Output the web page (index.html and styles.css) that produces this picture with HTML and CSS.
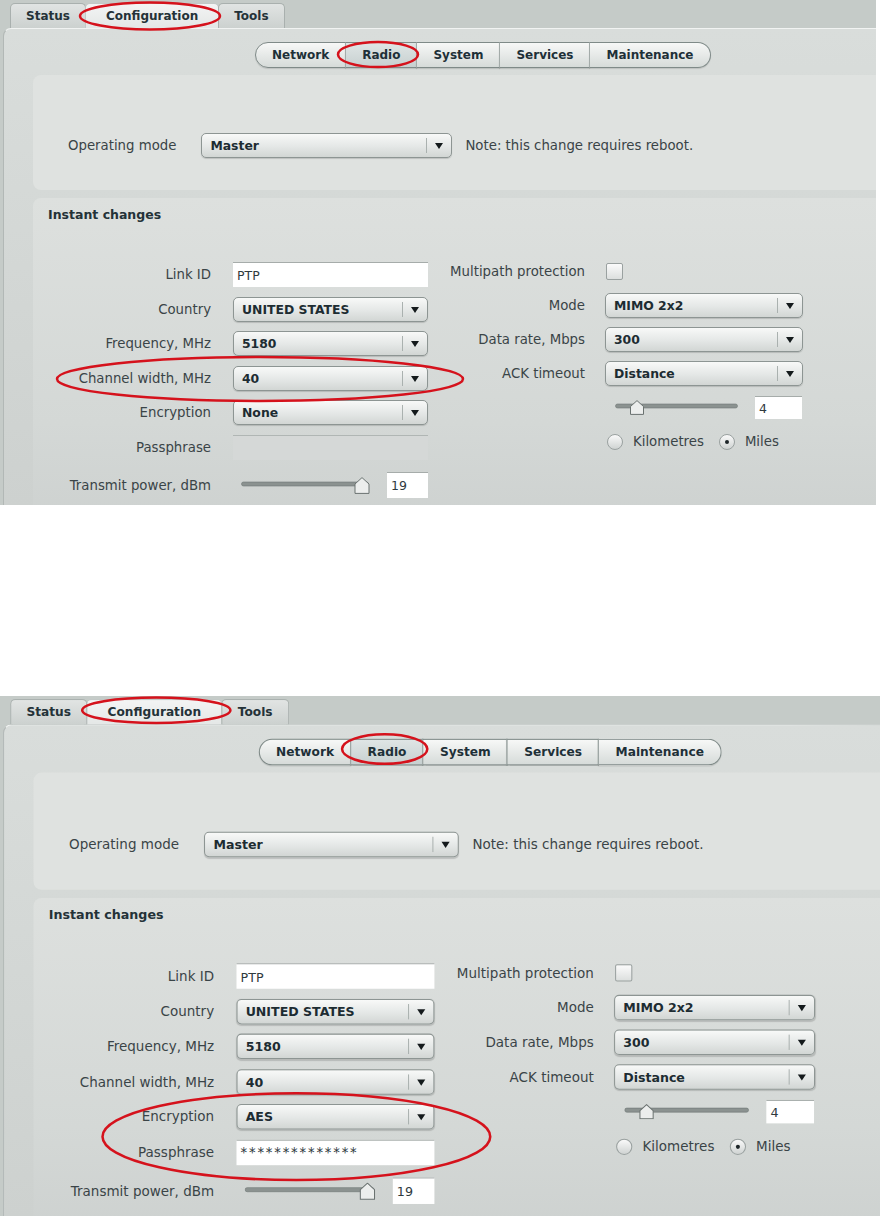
FILE: index.html
```html
<!DOCTYPE html>
<html lang="en">
<head>
    <meta charset="UTF-8">
    <title>Radio configuration</title>
    <link rel="stylesheet" href="styles.css">
</head>
<body>

<!-- Screenshot 1: encryption off -->
<div class="shot">
    <div class="tabs">
        <span class="tab">Status</span>
        <span class="tab tab-active">Configuration</span>
        <span class="tab">Tools</span>
    </div>
    <div class="content">
        <div class="subtabs">
            <span class="subtab">Network</span>
            <span class="subtab subtab-active">Radio</span>
            <span class="subtab">System</span>
            <span class="subtab">Services</span>
            <span class="subtab">Maintenance</span>
        </div>

        <div class="section section-mode">
            <div class="mode-row">
                <span class="label">Operating mode</span>
                <div class="select select-mode"><span>Master</span><i class="arrow"></i></div>
                <span class="label note">Note: this change requires reboot.</span>
            </div>
        </div>

        <div class="section section-instant">
            <h3>Instant changes</h3>
            <div class="fields">
                <div class="col col-left">
                    <span class="label">Link ID</span>
                    <div class="text">PTP</div>
                    <span class="label">Country</span>
                    <div class="select"><span>UNITED STATES</span><i class="arrow"></i></div>
                    <span class="label">Frequency, MHz</span>
                    <div class="select"><span>5180</span><i class="arrow"></i></div>
                    <span class="label">Channel width, MHz</span>
                    <div class="select"><span>40</span><i class="arrow"></i></div>
                    <span class="label">Encryption</span>
                    <div class="select"><span>None</span><i class="arrow"></i></div>
                    <span class="label">Passphrase</span>
                    <div class="text text-disabled"></div>
                    <span class="label row-power">Transmit power, dBm</span>
                    <div class="slider-cell row-power">
                        <svg class="slider slider-power" width="130" height="17" viewBox="0 0 130 17">
                            <rect x="0.5" y="5" width="127" height="4" rx="2" fill="#8b9290" stroke="#6f7775" stroke-width="0.6"/>
                            <polygon points="121,0.6 128,7 128,16.4 114,16.4 114,7" fill="#eceeed" stroke="#6a7270"/>
                        </svg>
                        <div class="text text-small">19</div>
                    </div>
                </div>

                <div class="col col-right">
                    <span class="label">Multipath protection</span>
                    <div><span class="checkbox"></span></div>
                    <span class="label">Mode</span>
                    <div class="select"><span>MIMO 2x2</span><i class="arrow"></i></div>
                    <span class="label">Data rate, Mbps</span>
                    <div class="select"><span>300</span><i class="arrow"></i></div>
                    <span class="label">ACK timeout</span>
                    <div class="select"><span>Distance</span><i class="arrow"></i></div>
                    <span></span>
                    <div class="slider-cell">
                        <svg class="slider slider-ack" width="124" height="15" viewBox="0 0 124 15">
                            <rect x="0.5" y="4" width="122" height="4" rx="2" fill="#8b9290" stroke="#6f7775" stroke-width="0.6"/>
                            <polygon points="22,0.6 28.5,6.5 28.5,14.4 15.5,14.4 15.5,6.5" fill="#eceeed" stroke="#6a7270"/>
                        </svg>
                        <div class="text text-ack">4</div>
                    </div>
                    <span></span>
                    <div class="radios">
                        <span class="radio"></span><span class="label">Kilometres</span>
                        <span class="radio radio-on"></span><span class="label">Miles</span>
                    </div>
                </div>
            </div>
        </div>
    </div>

    <svg class="marks" width="876" height="505" viewBox="0 0 876 505">
        <ellipse cx="150" cy="16" rx="70" ry="13.5"/>
        <ellipse cx="378" cy="54.5" rx="40" ry="12.5"/>
        <ellipse cx="260" cy="379" rx="203" ry="22"/>
    </svg>
</div>

<!-- Screenshot 2: AES encryption with passphrase -->
<div class="shot shot-b">
    <div class="tabs">
        <span class="tab">Status</span>
        <span class="tab tab-active">Configuration</span>
        <span class="tab">Tools</span>
    </div>
    <div class="content">
        <div class="subtabs">
            <span class="subtab">Network</span>
            <span class="subtab subtab-active">Radio</span>
            <span class="subtab">System</span>
            <span class="subtab">Services</span>
            <span class="subtab">Maintenance</span>
        </div>

        <div class="section section-mode">
            <div class="mode-row">
                <span class="label">Operating mode</span>
                <div class="select select-mode"><span>Master</span><i class="arrow"></i></div>
                <span class="label note">Note: this change requires reboot.</span>
            </div>
        </div>

        <div class="section section-instant">
            <h3>Instant changes</h3>
            <div class="fields">
                <div class="col col-left">
                    <span class="label">Link ID</span>
                    <div class="text">PTP</div>
                    <span class="label">Country</span>
                    <div class="select"><span>UNITED STATES</span><i class="arrow"></i></div>
                    <span class="label">Frequency, MHz</span>
                    <div class="select"><span>5180</span><i class="arrow"></i></div>
                    <span class="label">Channel width, MHz</span>
                    <div class="select"><span>40</span><i class="arrow"></i></div>
                    <span class="label">Encryption</span>
                    <div class="select"><span>AES</span><i class="arrow"></i></div>
                    <span class="label">Passphrase</span>
                    <div class="text text-secret">**************</div>
                    <span class="label row-power">Transmit power, dBm</span>
                    <div class="slider-cell row-power">
                        <svg class="slider slider-power" width="130" height="17" viewBox="0 0 130 17">
                            <rect x="0.5" y="5" width="127" height="4" rx="2" fill="#8b9290" stroke="#6f7775" stroke-width="0.6"/>
                            <polygon points="121,0.6 128,7 128,16.4 114,16.4 114,7" fill="#eceeed" stroke="#6a7270"/>
                        </svg>
                        <div class="text text-small">19</div>
                    </div>
                </div>

                <div class="col col-right">
                    <span class="label">Multipath protection</span>
                    <div><span class="checkbox"></span></div>
                    <span class="label">Mode</span>
                    <div class="select"><span>MIMO 2x2</span><i class="arrow"></i></div>
                    <span class="label">Data rate, Mbps</span>
                    <div class="select"><span>300</span><i class="arrow"></i></div>
                    <span class="label">ACK timeout</span>
                    <div class="select"><span>Distance</span><i class="arrow"></i></div>
                    <span></span>
                    <div class="slider-cell">
                        <svg class="slider slider-ack" width="124" height="15" viewBox="0 0 124 15">
                            <rect x="0.5" y="4" width="122" height="4" rx="2" fill="#8b9290" stroke="#6f7775" stroke-width="0.6"/>
                            <polygon points="22,0.6 28.5,6.5 28.5,14.4 15.5,14.4 15.5,6.5" fill="#eceeed" stroke="#6a7270"/>
                        </svg>
                        <div class="text text-ack">4</div>
                    </div>
                    <span></span>
                    <div class="radios">
                        <span class="radio"></span><span class="label">Kilometres</span>
                        <span class="radio radio-on"></span><span class="label">Miles</span>
                    </div>
                </div>
            </div>
        </div>
    </div>

    <svg class="marks" width="876" height="510" viewBox="0 0 876 510">
        <ellipse cx="154" cy="14" rx="73" ry="12.5"/>
        <ellipse cx="379" cy="52" rx="42" ry="14.5"/>
        <ellipse cx="292" cy="432" rx="191" ry="42.5"/>
    </svg>
</div>

</body>
</html>
```

FILE: styles.css
```css
body {
    margin: 0;
    width: 880px;
    height: 1216px;
    overflow: hidden;
    background: #fff;
    font-family: "DejaVu Sans", Verdana, sans-serif;
    color: #3a4447;
}

/* one screenshot of the router page */
.shot {
    position: relative;
    width: 876px;
    height: 505px;
    background: #c5cbc8;
    overflow: hidden;
}
.shot-b {
    height: 510px;
    margin-top: 191px;
    transform: scale(1.015, 1.02);
    transform-origin: 0 0;
}

/* main tabs */
.tabs {
    display: flex;
    height: 25px;
    padding: 3px 0 0 10px;
}
.tab {
    display: flex;
    align-items: center;
    justify-content: center;
    padding: 0 15px;
    margin-right: -1px;
    font-size: 12px;
    font-weight: bold;
    color: #243238;
    background: linear-gradient(#e1e4e3, #ccd1cf);
    border: 1px solid #a9b0ae;
    border-bottom: none;
    border-radius: 5px 5px 0 0;
}
.tab-active {
    padding: 0 20px;
    background: linear-gradient(#f3f4f4, #e4e7e6);
    border-color: #c2c8c6;
}

.content {
    box-sizing: border-box;
    height: calc(100% - 28px);
    margin-left: 3px;
    padding-top: 13px;
    background: linear-gradient(#d9dddb, #cdd1cf);
    border-top: 1px solid #f1f3f2;
    border-left: 1px solid #b2b8b6;
    border-top-left-radius: 8px;
}

/* radio / network / ... pills */
.subtabs {
    display: flex;
    margin-left: 251px;
    height: 26px;
}
.subtab {
    display: flex;
    align-items: center;
    padding: 0 16px;
    margin-left: -1px;
    font-size: 12px;
    font-weight: bold;
    color: #1e3038;
    background: linear-gradient(#f7f8f7, #d6dbd9);
    border: 1px solid #7f8a88;
    border-left-color: #a3aba9;
    box-shadow: 0 1px 1px rgba(0, 0, 0, 0.12);
}
.subtab:first-child {
    margin-left: 0;
    border-left-color: #7f8a88;
    border-radius: 13px 0 0 13px;
}
.subtab:last-child {
    border-radius: 0 13px 13px 0;
}
.subtab-active {
    background: linear-gradient(#dfe5e5, #c7d0d0);
}

.section {
    margin-left: 29px;
    background: #dfe2e0;
}
.section-mode {
    box-sizing: border-box;
    height: 115px;
    margin-top: 7px;
    padding: 58px 0 0 35px;
    border-radius: 8px 0 0 8px;
}
.mode-row {
    display: flex;
    align-items: center;
    height: 24px;
}
.mode-row .label {
    margin-right: 25px;
}
.mode-row .note {
    margin: 0 0 0 13px;
}
.select-mode {
    width: 251px;
    height: 24px;
}
.select-mode span {
    padding-left: 10px;
}

.section-instant {
    height: 400px;
    margin-top: 8px;
    padding: 9px 0 0 15px;
    background: linear-gradient(#dde0de, #d4d8d6 55%, #c8cccb);
    border-top-left-radius: 8px;
}
.section-instant h3 {
    margin: 0;
    font-size: 12.5px;
    line-height: 16px;
    color: #243238;
}

.fields {
    display: flex;
    align-items: flex-start;
    gap: 22px;
    margin-top: 39px;
}
.col {
    display: grid;
    grid-auto-rows: minmax(25px, auto);
    align-items: center;
}
.col-left {
    grid-template-columns: 163px 195px;
    column-gap: 22px;
    row-gap: 9.5px;
}
.col-right {
    grid-template-columns: 135px 198px;
    column-gap: 20px;
    row-gap: 9px;
    margin-top: -3px;
}
.col .label {
    justify-self: end;
}
.row-power {
    margin-top: 3px;
}

.label {
    font-size: 13.3px;
    white-space: nowrap;
    color: #3a4447;
}

/* fake form controls */
.select {
    display: flex;
    align-items: center;
    box-sizing: border-box;
    height: 25px;
    background: linear-gradient(#f8f9f8, #e4e7e6 55%, #d2d6d4);
    border: 1px solid #8d9593;
    border-radius: 5px;
    box-shadow: 0 1px 1px rgba(0, 0, 0, 0.15);
}
.select span {
    flex: 1;
    padding-left: 8px;
    font-size: 12.4px;
    font-weight: bold;
    color: #1d2c32;
}
.arrow {
    position: relative;
    width: 24px;
    height: 15px;
    border-left: 1px solid #aab1af;
}
.arrow::after {
    content: "";
    position: absolute;
    left: 8px;
    top: 5px;
    border-top: 6px solid #141a1c;
    border-left: 4px solid transparent;
    border-right: 4px solid transparent;
}

.text {
    display: flex;
    align-items: center;
    box-sizing: border-box;
    height: 25px;
    padding-left: 4px;
    background: #fff;
    border-top: 1px solid #a6acaa;
    font-size: 12.5px;
    color: #2f3a3e;
}
.text-disabled {
    background: #d5d8d7;
    border-top-color: #b0b6b4;
}
.text-secret {
    letter-spacing: 1.8px;
    font-size: 13px;
}
.text-small {
    width: 41px;
    height: 26px;
    margin-left: auto;
}
.text-ack {
    width: 47px;
    height: 23px;
    margin-left: auto;
    margin-right: 1px;
}

.slider-cell {
    display: flex;
    align-items: center;
}
.slider-power {
    margin-left: 8px;
}
.slider-ack {
    margin-left: 10px;
}

.checkbox {
    display: block;
    width: 17px;
    height: 17px;
    margin-left: 1px;
    box-sizing: border-box;
    background: linear-gradient(#fbfbfb, #dcdfde);
    border: 1px solid #9aa1a0;
    border-radius: 2px;
}

.radios {
    display: flex;
    align-items: center;
    padding-left: 2px;
}
.radios .label {
    margin: 0 15px 0 10px;
}
.radio {
    position: relative;
    box-sizing: border-box;
    width: 16px;
    height: 16px;
    background: linear-gradient(#fafafa, #cfd3d2);
    border: 1px solid #9aa1a0;
    border-radius: 50%;
}
.radio-on::after {
    content: "";
    position: absolute;
    left: 5px;
    top: 5px;
    width: 4px;
    height: 4px;
    border-radius: 50%;
    background: #1d2528;
}

/* red hand-drawn circles over the screenshot */
.marks {
    position: absolute;
    left: 0;
    top: 0;
    pointer-events: none;
}
.marks ellipse {
    fill: none;
    stroke: #d5121c;
    stroke-width: 2.5;
}
```
